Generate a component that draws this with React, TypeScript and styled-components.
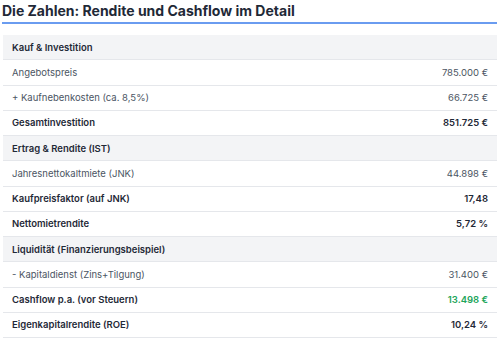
import styled, { createGlobalStyle } from "styled-components";

const GlobalStyle = createGlobalStyle`
  body {
    margin: 0;
    background: #ffffff;
    font-family: Inter, "Noto Sans", sans-serif;
  }
`

type Row = {
  label: string;
  value?: string;
  kind: "section" | "plain" | "strong";
  positive?: boolean;
}

const rows: Row[] = [
  { label: "Kauf & Investition", kind: "section" },
  { label: "Angebotspreis", value: "785.000 €", kind: "plain" },
  { label: "+ Kaufnebenkosten (ca. 8,5%)", value: "66.725 €", kind: "plain" },
  { label: "Gesamtinvestition", value: "851.725 €", kind: "strong" },
  { label: "Ertrag & Rendite (IST)", kind: "section" },
  { label: "Jahresnettokaltmiete (JNK)", value: "44.898 €", kind: "plain" },
  { label: "Kaufpreisfaktor (auf JNK)", value: "17,48", kind: "strong" },
  { label: "Nettomietrendite", value: "5,72 %", kind: "strong" },
  { label: "Liquidität (Finanzierungsbeispiel)", kind: "section" },
  { label: "- Kapitaldienst (Zins+Tilgung)", value: "31.400 €", kind: "plain" },
  { label: "Cashflow p.a. (vor Steuern)", value: "13.498 €", kind: "strong", positive: true },
  { label: "Eigenkapitalrendite (ROE)", value: "10,24 %", kind: "strong" },
]

const Page = styled.div`
  padding: 0 3px 0 3px;
  width: 494px;
`
const Title = styled.h2`
  margin: 0 0 0 -1px;
  padding: 3px 0 4px 0;
  font-size: 14px;
  line-height: 15px;
  font-weight: 700;
  color: #1f2937;
  border-bottom: 2px solid #6a9cf0;
`
const Table = styled.div`
  margin-top: 11px;
  display: flex;
  flex-direction: column;
`
const TableRow = styled.div<{ $kind: Row["kind"] }>`
  display: flex;
  justify-content: space-between;
  align-items: center;
  box-sizing: border-box;
  height: 25.25px;
  padding: 0 9px;
  border-bottom: 1px solid #e5e7eb;
  background: ${p => (p.$kind === "section" ? "#f3f4f6" : "#ffffff")};
  font-size: 9.5px;
`
const Label = styled.span<{ $kind: Row["kind"] }>`
  color: ${p => (p.$kind === "plain" ? "#4b5563" : "#1f2937")};
  font-weight: ${p => (p.$kind === "plain" ? 400 : 600)};
`
const Value = styled.span<{ $kind: Row["kind"]; $positive?: boolean }>`
  color: ${p => (p.$positive ? "#22a55a" : p.$kind === "plain" ? "#4b5563" : "#1f2937")};
  font-weight: ${p => (p.$kind === "plain" ? 400 : 600)};
`

export default function App() {
  return (
    <>
      <GlobalStyle />
      <Page>
        <Title>Die Zahlen: Rendite und Cashflow im Detail</Title>
        <Table>
          {rows.map(r => (
            <TableRow key={r.label} $kind={r.kind}>
              <Label $kind={r.kind}>{r.label}</Label>
              {r.value && (
                <Value $kind={r.kind} $positive={r.positive}>{r.value}</Value>
              )}
            </TableRow>
          ))}
        </Table>
      </Page>
    </>
  )
}
